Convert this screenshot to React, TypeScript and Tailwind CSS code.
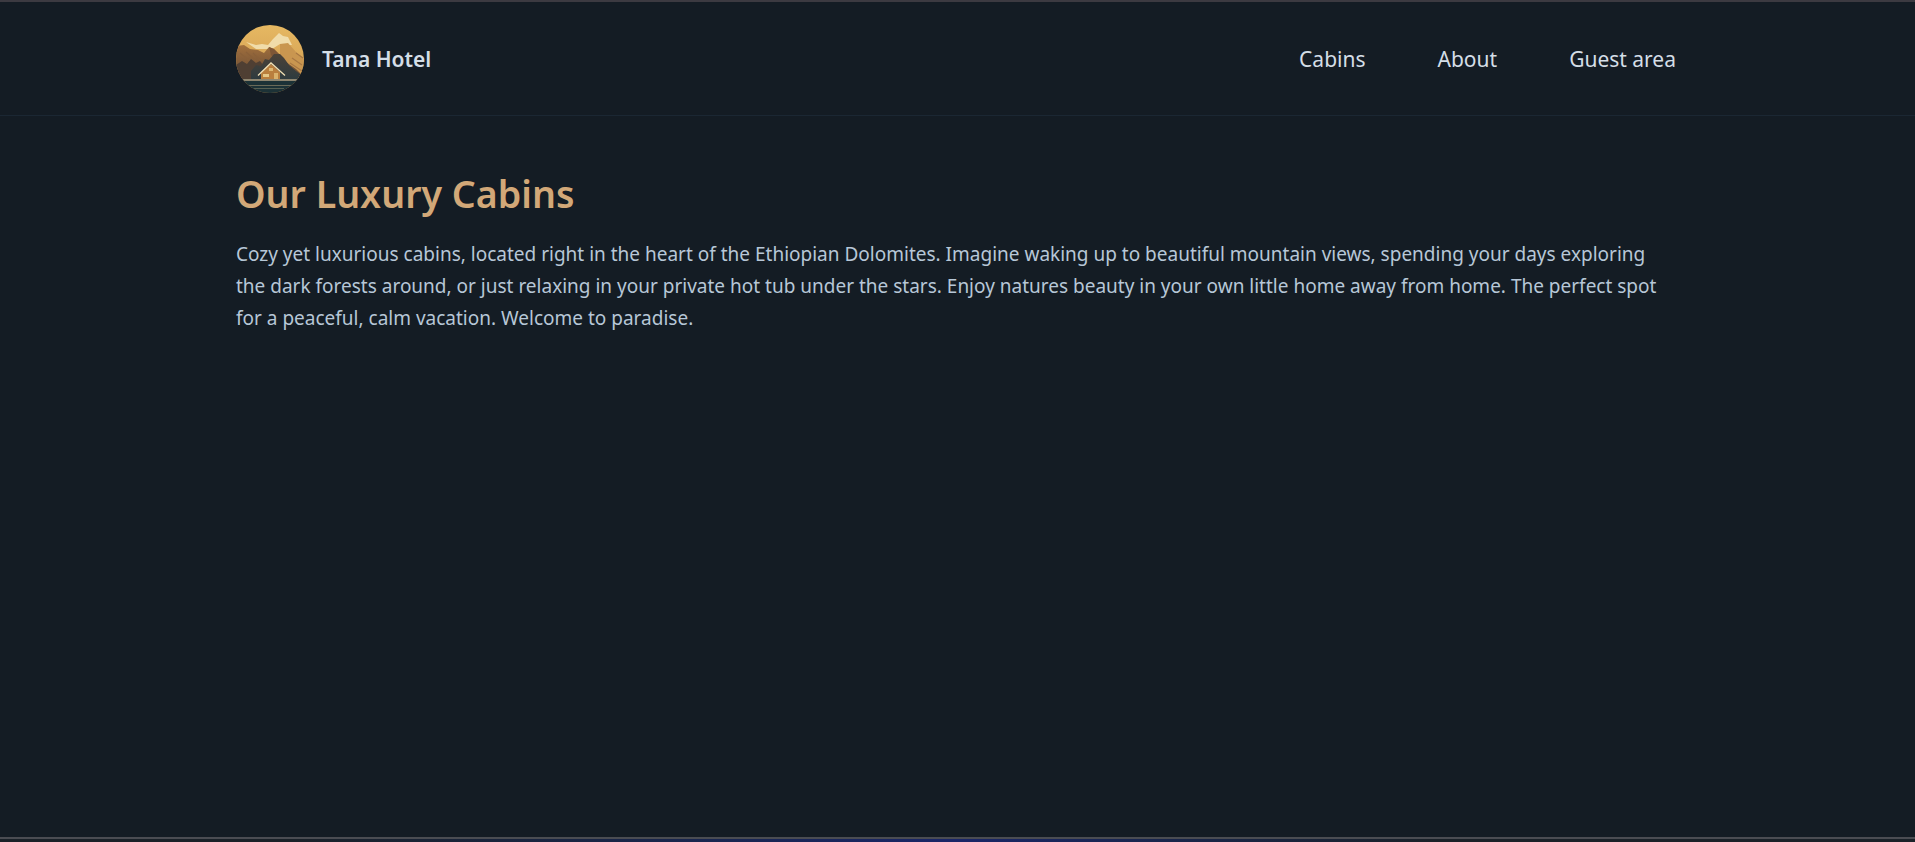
function Logo() {
  return (
    <svg width="68" height="68" viewBox="0 0 68 68" className="shrink-0">
      <defs>
        <clipPath id="logo-circle">
          <circle cx="34" cy="34" r="34" />
        </clipPath>
        <linearGradient id="logo-sky" x1="0" y1="0" x2="0" y2="1">
          <stop offset="0" stopColor="#e6b862" />
          <stop offset="0.5" stopColor="#d9a758" />
          <stop offset="1" stopColor="#b07c40" />
        </linearGradient>
        <linearGradient id="logo-ridge" x1="0" y1="0" x2="0" y2="1">
          <stop offset="0" stopColor="#a2703d" />
          <stop offset="1" stopColor="#5f4533" />
        </linearGradient>
        <linearGradient id="logo-slate" x1="0" y1="0" x2="0" y2="1">
          <stop offset="0" stopColor="#4b4238" />
          <stop offset="1" stopColor="#2a3a40" />
        </linearGradient>
      </defs>
      <g clipPath="url(#logo-circle)">
        <rect width="68" height="68" fill="url(#logo-sky)" />
        {/* pale peaks behind */}
        <path d="M10 17 L20 20 L26 19 L32 20 L37 14 L43 8 L47 11 L52 12 L56 20 L50 20 L44 19 L36 24 L20 24 Z" fill="#f0dcaa" />
        <path d="M44 19 L52 18 L60 27 L68 34 L68 54 L44 54 Z" fill="#c99650" />
        {/* brown ridge */}
        <path d="M0 21 L8 20 L14 24 L22 25 L28 28 L33 22 L38 24 L44 30 L50 37 L60 44 L68 52 L68 56 L0 56 Z" fill="url(#logo-ridge)" />
        <path d="M33 22 L38 24 L44 30 L50 37 L46 44 L40 36 L35 30 Z" fill="#7d5636" />
        <path d="M60 28 L67 33 M56 33 L66 40 M54 38 L66 46" stroke="#a87843" strokeWidth="1.2" />
        <path d="M4 28 L14 36 M10 27 L20 36 M17 28 L25 36" stroke="#8a6039" strokeWidth="1.2" />
        {/* near hills */}
        <path d="M0 40 L6 36 L11 39 L15 34 L20 38 L24 36 L30 44 L30 56 L0 56 Z" fill="#4f3f33" />
        <path d="M15 46 L20 40 L25 41 L29 34 L33 35 L38 29 L44 29 L48 33 L53 40 L60 46 L68 52 L68 58 L15 58 Z" fill="url(#logo-slate)" />
        {/* water */}
        <rect y="54" width="68" height="14" fill="#1c3237" />
        <rect x="6" y="54" width="58" height="2" fill="#8f8670" />
        <rect x="12" y="60" width="44" height="1" fill="#6a6a58" />
        <rect x="18" y="63" width="30" height="1" fill="#566053" />
        {/* cabin */}
        <path d="M25 54 L25 47 L35 39 L44 47 L44 54 Z" fill="#b97f3e" />
        <path d="M22 50.5 L35 38 L49 50.5" fill="none" stroke="#efdfb4" strokeWidth="1.3" />
        <rect x="33" y="43" width="4" height="3" fill="#dcb873" />
        <rect x="27" y="49" width="6" height="3" fill="#e4c787" />
        <rect x="38" y="48" width="4" height="6" fill="#d9b26c" />
      </g>
    </svg>
  );
}

export default function App() {
  const links = ["Cabins", "About", "Guest area"];

  return (
    <div className="h-[842px] flex flex-col overflow-hidden bg-[#141c24] font-['Noto_Sans',sans-serif]">
      <div className="h-[2px] bg-[#3c3a41]" />

      <header className="h-[114px] border-b border-[#1b2733] pl-[236px] pr-[239px] flex items-center justify-between">
        <a className="flex items-center gap-[18px]">
          <Logo />
          <span className="mt-[2px] text-[21px] font-semibold text-[#d4dee7]">Tana Hotel</span>
        </a>
        <nav className="mt-[2px] flex gap-[72px] text-[21px] text-[#d4dee7]">
          {links.map((link) => (
            <a key={link}>{link}</a>
          ))}
        </nav>
      </header>

      <main className="flex-1 pl-[236px] pr-[239px] pt-[54px]">
        <h1 className="text-[37.6px] leading-[48px] font-semibold text-[#d2a878] mb-[20px]">Our Luxury Cabins</h1>
        <p className="text-[19px] leading-8 text-[#b7c7d7]">
          Cozy yet luxurious cabins, located right in the heart of the Ethiopian Dolomites. Imagine waking up to beautiful mountain views, spending your days exploring the dark forests around, or just relaxing in your private hot tub under the stars. Enjoy natures beauty in your own little home away from home. The perfect spot for a peaceful, calm vacation. Welcome to paradise.
        </p>
      </main>

      <div className="h-[2px] bg-[#4a4c52]" />
      <div className="h-[3px] bg-gradient-to-r from-[#1a2128] from-[15%] via-[#1a2668] to-[#1a2128] to-[75%]" />
    </div>
  );
}
